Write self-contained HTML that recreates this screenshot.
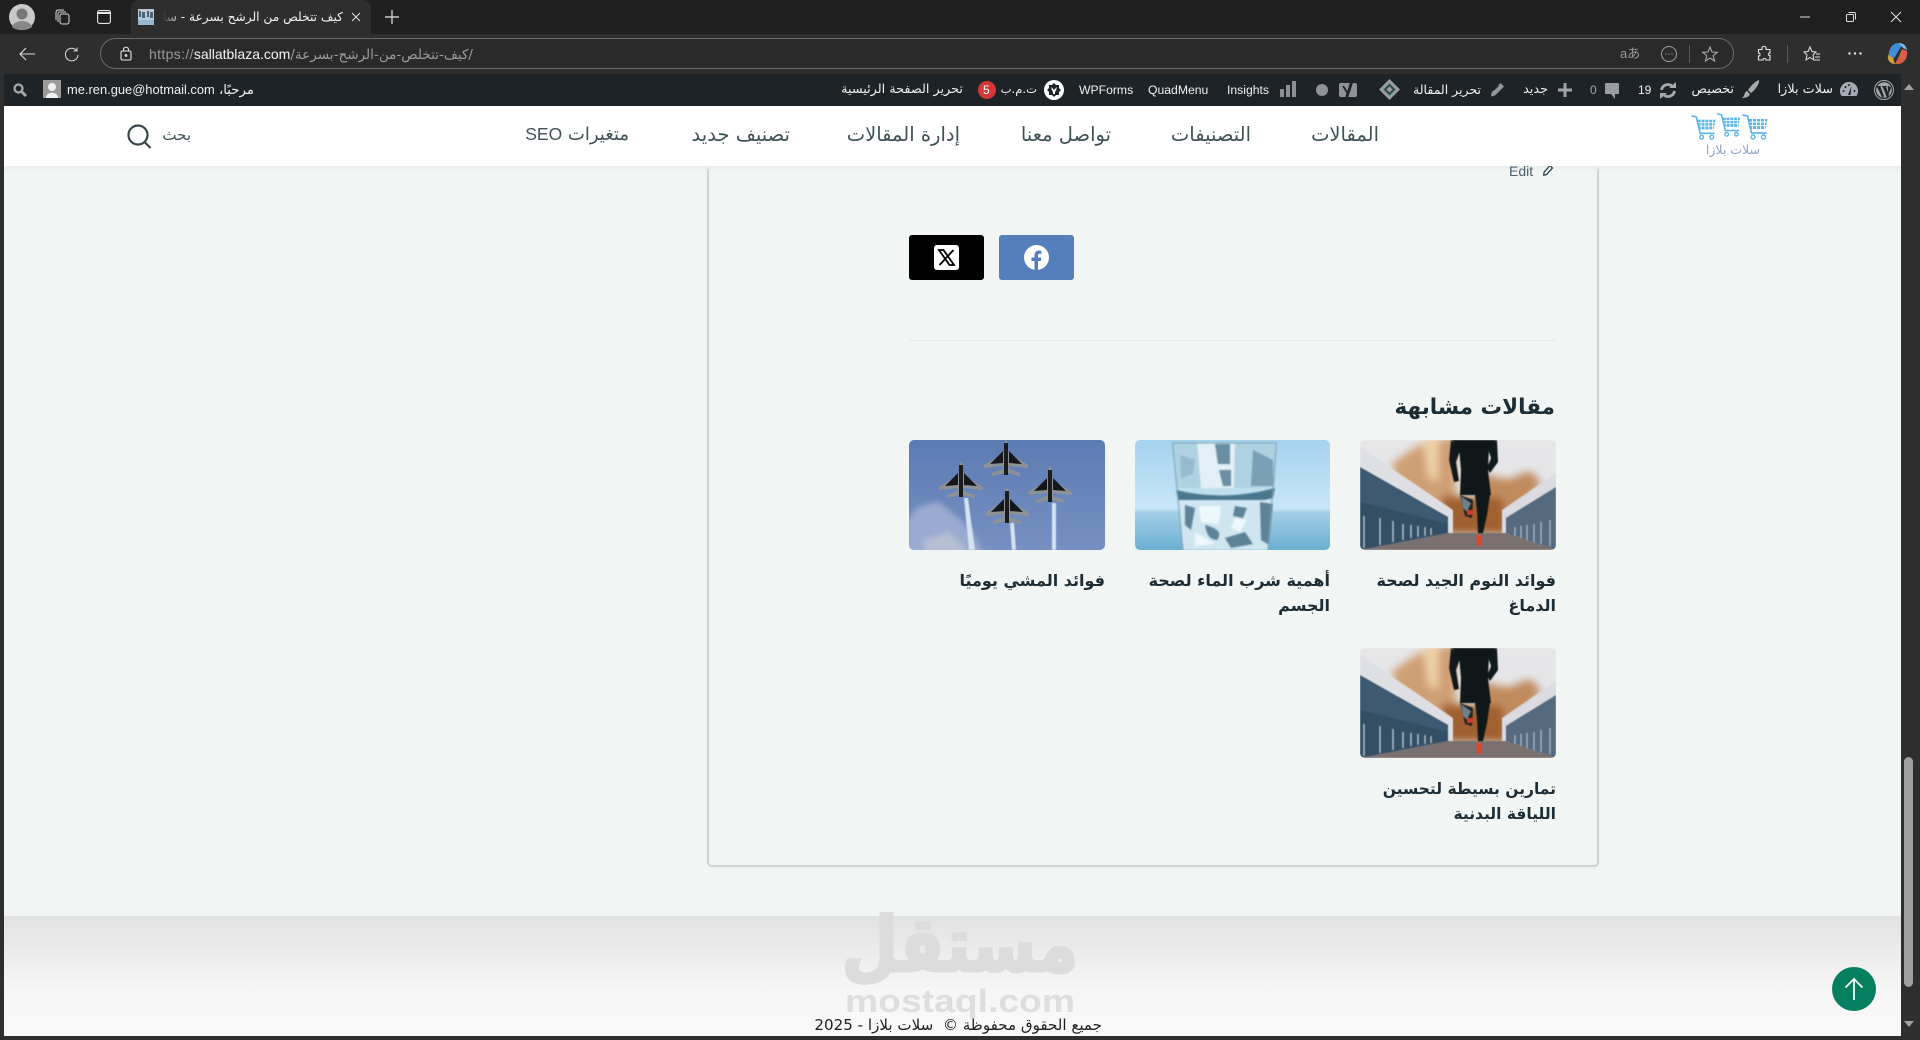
<!DOCTYPE html>
<html lang="ar">
<head>
<meta charset="utf-8">
<title>كيف تتخلص من الرشح بسرعة - سلات بلازا</title>
<style>
html,body{margin:0;padding:0;width:1920px;height:1040px;overflow:hidden;background:#2d2d2d;font-family:"DejaVu Sans","Liberation Sans",sans-serif}
.t{position:absolute;white-space:nowrap;line-height:1}
.ar{direction:rtl;font-family:"DejaVu Sans","Noto Sans CJK SC",sans-serif}
.la{font-family:"Liberation Sans",sans-serif}
.i{position:absolute;overflow:visible}
.box{position:absolute}
.adm{color:#f0f0f1;font-size:12.800px}
.nav{color:#3f5256;font-size:19.500px;top:125px}
.ttl{color:#1d2d35;font-size:16px;font-weight:bold;line-height:24.500px;text-align:right;width:196px;white-space:normal}
.pic{position:absolute;border-radius:5px;overflow:hidden;display:block}
</style>
</head>
<body>
<svg width="0" height="0" style="position:absolute">
<defs>
<symbol id="run" viewBox="0 0 196 110" preserveAspectRatio="none">
<rect width="196" height="110" fill="#e6e6e8"/>
<g style="filter:blur(4px)">
<path d="M32 24C45 14 60 2 78 -2L96 -2 96 94 44 80Z" fill="#cf9f74"/>
<path d="M62 -2H80L78 42 68 38Z" fill="#ecd0a8"/>
<path d="M126 34C140 38 150 42 160 34 170 30 176 32 180 44L150 94H110Z" fill="#c08c5e"/>
<path d="M82 56 142 58 146 94H86Z" fill="#a0602f"/>
</g>
<path d="M0 7 93 70 93 93 88 93 88 77 0 27Z" fill="#dedfe4"/>
<path d="M0 27 88 77 88 93 0 110Z" fill="#3d5a72"/>
<path d="M0 62 88 84 88 93 0 110Z" fill="#2f4a60" opacity=".7"/>
<path d="M4 76V108M20 78V105M33 81V102M43 84V100M51 85V98M58 86V97M65 87V96M71 88V95" stroke="#b9c4d2" stroke-width="1.400"/>
<path d="M196 33 142 70V93H146V78L196 47Z" fill="#dadae0"/>
<path d="M196 47 146 78V93L196 110Z" fill="#55697f"/>
<path d="M190 80V106M181 82V104M174 84V102M167 85V100M161 86V98M155 87V96" stroke="#b7c0cc" stroke-width="1.200"/>
<path d="M0 110 88 93H146L196 110Z" fill="#79706f"/>
<path d="M91 0 89 20 94 42 99 41 96 22 101 8Z" fill="#10191b"/>
<path d="M137 0 138 22 130 33 127 28 131 18 127 6Z" fill="#10191b"/>
<path d="M92 0H136L129 8 128 30 131 55 100 55 101 30 99 8Z" fill="#0f1719"/>
<path d="M100 55 113 60 112 78 105 76Z" fill="#1a2326"/>
<path d="M101 56 111 63 107 72 103 68Z" fill="#6f8088"/>
<path d="M115 55H130L127 75 123 93H118L117 70Z" fill="#10181a"/>
<rect x="107" y="70" width="6" height="5" fill="#d03a28"/>
<path d="M116 95H122L121 106H117Z" fill="#dc4530"/>
</symbol>
<symbol id="jet" viewBox="-24 -20 48 40">
<path d="M-1.500-15L0-19 1.500-15 2.500-5 22 7V10L3 8 3 11 14 15V18L2 15 0 18-2 15-14 18V15L-3 11-3 8-22 10V7L-2.500-5Z" fill="#8f9294"/>
<path d="M-3-7-16 6-3 5ZM3-7 16 6 3 5Z" fill="#15181a"/>
<path d="M-2-15H2V17H-2Z" fill="#1a1c1e"/>
</symbol>
<symbol id="cart" viewBox="0 0 28 28">
<path d="M1 2 6 3 10 20H25" fill="none" stroke="#5ab6ea" stroke-width="1.700"/>
<path d="M7 6H26L24 16H9Z" fill="#5ab6ea"/>
<path d="M11 6V16M15 6V16M19 6V16M23 6V16M8 9H26M9 12.500H25" stroke="#fff" stroke-width=".9"/>
<circle cx="11.500" cy="24" r="2" fill="none" stroke="#5ab6ea" stroke-width="1.400"/>
<circle cx="22" cy="24" r="2" fill="none" stroke="#5ab6ea" stroke-width="1.400"/>
</symbol>
<linearGradient id="fade" x1="0" x2="1"><stop offset="0" stop-color="#2e2e2e"/><stop offset="1" stop-color="#2e2e2e" stop-opacity="0"/></linearGradient>
</defs>
</svg>

<!-- tab strip -->
<div class="box" style="left:0;top:0;width:1920px;height:34px;background:#202020"></div>
<div class="box" style="left:131px;top:0;width:240px;height:34px;background:#2e2e2e;border-radius:8px 8px 0 0"></div>
<svg class="i" style="left:9px;top:4px" width="26" height="26" viewBox="0 0 26 26"><circle cx="13" cy="13" r="13" fill="#c9c9c9"/><circle cx="13" cy="10" r="5.500" fill="#777"/><path d="M3 23C5 15 21 15 23 23 18 27 8 27 3 23Z" fill="#888"/></svg>
<svg class="i" style="left:54px;top:9px" width="16" height="16" viewBox="0 0 16 16" fill="none" stroke="#d8d8d8" stroke-width="1"><rect x="6" y="5" width="9" height="10" rx="2"/><path d="M4 13V5C4 3 5 3 6 3H12M2 11V4C2 2 3 1 4 1H10"/></svg>
<svg class="i" style="left:97px;top:10px" width="14" height="14" viewBox="0 0 14 14" fill="none" stroke="#e8e8e8" stroke-width="1.100"><rect x=".6" y=".6" width="12.800" height="12.800" rx="2"/><path d="M.6 3H13.400" stroke-width="2"/></svg>
<svg class="i" style="left:138px;top:9px" width="16" height="16" viewBox="0 0 16 16"><rect width="16" height="16" fill="#b8c8d6"/><path d="M1 2H3V8H1ZM4 3H7V9H4ZM9 2H11V8H9ZM12 3H15V9H12Z" fill="#4a6478"/><rect y="11" width="16" height="5" fill="#9ab6cc"/></svg>
<div class="t ar" style="left:163px;top:10px;width:180px;overflow:hidden;font-size:12.200px;color:#f2f2f2;height:14px;text-align:right;line-height:14px">كيف تتخلص من الرشح بسرعة - سلات بلازا</div>
<svg class="i" style="left:163px;top:9px" width="16" height="16"><rect width="16" height="16" fill="url(#fade)"/></svg>
<svg class="i" style="left:351px;top:12px" width="10" height="10" viewBox="0 0 10 10"><path d="M1 1 9 9M9 1 1 9" stroke="#e0e0e0" stroke-width="1"/></svg>
<svg class="i" style="left:385px;top:10px" width="14" height="14" viewBox="0 0 14 14"><path d="M7 0V14M0 7H14" stroke="#e8e8e8" stroke-width="1.200"/></svg>
<svg class="i" style="left:1800px;top:16px" width="10" height="2" viewBox="0 0 10 2"><path d="M0 1H10" stroke="#ddd" stroke-width="1"/></svg>
<svg class="i" style="left:1846px;top:12px" width="10" height="10" viewBox="0 0 10 10" fill="none" stroke="#ddd" stroke-width="1"><rect x=".5" y="2.500" width="7" height="7" rx="1"/><path d="M2.500 .5H8C9 .5 9.500 1 9.500 2V7.500"/></svg>
<svg class="i" style="left:1891px;top:12px" width="10" height="10" viewBox="0 0 10 10"><path d="M0 0 10 10M10 0 0 10" stroke="#e0e0e0" stroke-width="1"/></svg>

<!-- toolbar -->
<div class="box" style="left:0;top:34px;width:1920px;height:40px;background:#2e2e2e"></div>
<svg class="i" style="left:19px;top:47px" width="16" height="14" viewBox="0 0 16 14" fill="none" stroke="#dcdcdc" stroke-width="1.100"><path d="M16 7H1M7 1 1 7 7 13"/></svg>
<svg class="i" style="left:64px;top:47px" width="15" height="15" viewBox="0 0 15 15" fill="none" stroke="#dcdcdc" stroke-width="1"><path d="M12.500 3.500A6.300 6.300 0 1 0 14 8"/><path d="M13 .5V4H9.500"/></svg>
<div class="box" style="left:100px;top:38px;width:1632px;height:29px;border:1px solid #6b6b6b;border-radius:16px;background:#2a2a2a"></div>
<svg class="i" style="left:120px;top:46px" width="12" height="15" viewBox="0 0 12 15" fill="none" stroke="#e4e4e4" stroke-width="1.100"><rect x="1" y="5" width="10" height="9" rx="1.500"/><path d="M3.500 5V3.500C3.500 .5 8.500 .5 8.500 3.500V5"/><circle cx="6" cy="9.500" r=".8" fill="#e4e4e4"/></svg>
<div class="t la" style="left:149px;top:47px;font-size:14px;line-height:14px;color:#9b9b9b"><span style="letter-spacing:.35px">https://</span><span style="color:#f2f2f2">sallatblaza.com</span><span style="font-family:'DejaVu Sans',sans-serif;font-size:13.550px">/كيف-تتخلص-من-الرشح-بسرعة/</span></div>
<div class="t la" style="left:1620px;top:47px;font-size:13px;color:#9a9a9a;font-family:'Liberation Sans','Noto Sans CJK JP',sans-serif">aあ</div>
<svg class="i" style="left:1661px;top:46px" width="16" height="16" viewBox="0 0 16 16" fill="none" stroke="#a0a0a0" stroke-width="1"><circle cx="8" cy="8" r="7.500"/><path d="M4.500 8H5.500M7.500 8H8.500M10.500 8H11.500" stroke-width="1.300"/></svg>
<div class="box" style="left:1689px;top:45px;width:1px;height:18px;background:#5a5a5a"></div>
<svg class="i" style="left:1702px;top:46px" width="16" height="16" viewBox="0 0 16 16" fill="none" stroke="#a8a8a8" stroke-width="1.100"><path d="M8 1 10 6 15.300 6.300 11.200 9.700 12.500 15 8 12 3.500 15 4.800 9.700 .7 6.300 6 6Z"/></svg>
<svg class="i" style="left:1756px;top:46px" width="16" height="16" viewBox="0 0 16 16" fill="none" stroke="#e4e4e4" stroke-width="1.100"><path d="M6 1.500C6.500 0 9.500 0 10 1.500V3.500H14V7C12 6.500 12 10 14 9.500V14H10C10.500 12 6.500 12 7 14H2.500V10C4.500 10.500 4.500 6.500 2.500 7V3.500H6Z"/></svg>
<div class="box" style="left:1787px;top:45px;width:1px;height:18px;background:#5a5a5a"></div>
<svg class="i" style="left:1803px;top:46px" width="18" height="16" viewBox="0 0 18 16" fill="none" stroke="#e4e4e4" stroke-width="1"><path d="M7 1 9 5.500 13 6 10 9 11 14 7 11.500 3 14 4 9 1 6 5 5.500Z"/><path d="M13 8H17M12 11H17M12 14H17"/></svg>
<svg class="i" style="left:1848px;top:52px" width="14" height="3" viewBox="0 0 14 3"><circle cx="1.500" cy="1.500" r="1.200" fill="#e4e4e4"/><circle cx="7" cy="1.500" r="1.200" fill="#e4e4e4"/><circle cx="12.500" cy="1.500" r="1.200" fill="#e4e4e4"/></svg>
<svg class="i" style="left:1886px;top:43px" width="22" height="21" viewBox="0 0 22 21"><path d="M3 10C4 3 8 0 13 0L16 2 9 14 5 18C2 16 2 13 3 10Z" fill="#3f8fd8"/><path d="M13 0C17 0 20 2 21 7L17 5Z" fill="#7fb8e8"/><path d="M2 12 7 15 9 21C4 21 1 17 2 12Z" fill="#d8a030"/><path d="M16 6 21 8C22 14 19 20 13 21H9L13 13Z" fill="#d8604a"/></svg>

<!-- chrome edges -->
<div class="box" style="left:0;top:74px;width:4px;height:966px;background:#2e2e2e"></div>
<div class="box" style="left:0;top:1036px;width:1920px;height:4px;background:#2e2e2e"></div>
<div class="box" style="left:1901px;top:74px;width:19px;height:966px;background:#2e2e2e"></div>
<svg class="i" style="left:1904px;top:84px" width="10" height="6" viewBox="0 0 10 6"><path d="M5 0 10 6H0Z" fill="#a0a0a0"/></svg>
<div class="box" style="left:1904px;top:757px;width:9px;height:230px;border-radius:5px;background:#9f9f9f"></div>
<svg class="i" style="left:1904px;top:1021px" width="10" height="6" viewBox="0 0 10 6"><path d="M0 0H10L5 6Z" fill="#a0a0a0"/></svg>

<!-- page -->
<div class="box" style="left:4px;top:106px;width:1897px;height:930px;background:#f1f5f4;overflow:hidden"></div>

<!-- card -->
<div class="box" style="left:707px;top:120px;width:888px;height:745px;border:2px solid #ced4d8;border-top:0;border-radius:0 0 5px 5px;box-shadow:0 1px 2px rgba(0,0,0,.04)"></div>

<!-- admin bar -->
<div class="box" style="left:4px;top:74px;width:1897px;height:32px;background:#1d2327"></div>
<svg class="i" style="left:13px;top:83px" width="14" height="14" viewBox="0 0 14 14" fill="none" stroke="#a7aaad" stroke-width="2.200"><circle cx="5.500" cy="5.500" r="4"/><path d="M8.500 8.500 13 13" stroke-width="2.800"/></svg>
<svg class="i" style="left:43px;top:80px" width="18" height="18" viewBox="0 0 18 18"><rect width="18" height="18" fill="#9c9c9c"/><circle cx="9" cy="7" r="4" fill="#f0f0f0"/><path d="M3 18C3 11 15 11 15 18Z" fill="#f0f0f0"/></svg>
<div class="t la adm" style="left:67px;top:84px;font-size:12.900px">me.ren.gue@hotmail.com</div>
<div class="t ar adm" style="right:1666px;top:84px;font-size:13.300px">مرحبًا،</div>
<div class="t ar adm" style="right:957px;top:84px">تحرير الصفحة الرئيسية</div>
<svg class="i" style="left:978px;top:81px" width="18" height="18" viewBox="0 0 18 18"><circle cx="9" cy="9" r="9" fill="#d63638"/></svg>
<div class="t la" style="left:983px;top:84px;font-size:12px;color:#fff">5</div>
<div class="t ar adm" style="right:883px;top:84px;font-size:11.600px">ت.م.ب</div>
<svg class="i" style="left:1044px;top:80px" width="20" height="20" viewBox="0 0 20 20"><circle cx="10" cy="10" r="10" fill="#fff"/><path d="M10 3 12 5 15 5 15 8 17 10 15 12 15 15 12 15 10 17 8 15 5 15 5 12 3 10 5 8 5 5 8 5Z" fill="#1d2327"/><path d="M7.500 7 10 10 12.500 7V9.500L11 12V14H9V12L7.500 9.500Z" fill="#fff"/></svg>
<div class="t la adm" style="left:1079px;top:84px;font-size:12.200px">WPForms</div>
<div class="t la adm" style="left:1148px;top:84px;font-size:12.200px">QuadMenu</div>
<div class="t la adm" style="left:1227px;top:84px;font-size:12.200px">Insights</div>
<svg class="i" style="left:1280px;top:81px" width="16" height="16" viewBox="0 0 16 16"><path d="M0 8H4V16H0ZM6 4H10V16H6ZM12 0H16V16H12Z" fill="#8c8f94"/></svg>
<svg class="i" style="left:1316px;top:84px" width="12" height="12" viewBox="0 0 12 12"><circle cx="6" cy="6" r="6" fill="#8f9296"/></svg>
<svg class="i" style="left:1339px;top:80px" width="18" height="19" viewBox="0 0 18 19"><path d="M0 5Q0 3 2 3H16Q18 3 18 5V15Q18 17 16 17H2Q0 17 0 15Z" fill="#8f9296"/><path d="M5 6 8.500 11 11.500 1H14.500L9 18H6L7.500 13 3 6Z" fill="#1d2327"/></svg>
<svg class="i" style="left:1379px;top:79px" width="21" height="21" viewBox="0 0 21 21"><path d="M10.500 0 21 10.500 10.500 21 0 10.500Z" fill="#9a9da0"/><path d="M10.500 4 17 10.500 10.500 17 4 10.500Z" fill="#3a4a50" stroke="#6aa" stroke-width=".6"/><path d="M10.500 7.500 13.500 10.500 10.500 13.500 7.500 10.500Z" fill="#9a9da0"/></svg>
<div class="t ar adm" style="right:439px;top:84px;font-size:12.500px">تحرير المقالة</div>
<svg class="i" style="left:1490px;top:82px" width="15" height="15" viewBox="0 0 15 15"><path d="M10.500 1 14 4.500 5 13.500 1 14.500 1.500 10.500Z" fill="#8f98a2"/><path d="M3.500 8.500 9 3.500" stroke="#1d2327" stroke-width=".7"/></svg>
<div class="t ar adm" style="right:372px;top:84px">جديد</div>
<svg class="i" style="left:1558px;top:83px" width="14" height="14" viewBox="0 0 14 14"><path d="M5.500 0H8.500V5.500H14V8.500H8.500V14H5.500V8.500H0V5.500H5.500Z" fill="#a0a3a7"/></svg>
<div class="t la adm" style="left:1590px;top:84px;font-size:12px;color:#a7aaad">0</div>
<svg class="i" style="left:1605px;top:83px" width="14" height="16" viewBox="0 0 14 16"><path d="M1 0H13Q14 0 14 1V10Q14 11 13 11H10V16L6 11H1Q0 11 0 10V1Q0 0 1 0Z" fill="#9a9da1"/></svg>
<div class="t la adm" style="left:1638px;top:84px;font-size:12px">19</div>
<svg class="i" style="left:1659px;top:82px" width="18" height="17" viewBox="0 0 18 17" fill="none" stroke="#a7aaad" stroke-width="2.800"><path d="M2.500 8A6.500 6.500 0 0 1 14 5M15.500 9A6.500 6.500 0 0 1 4 12"/><path d="M10 6H17V0ZM8 11H1V17Z" fill="#a7aaad" stroke="none"/></svg>
<div class="t ar adm" style="right:186px;top:84px">تخصيص</div>
<svg class="i" style="left:1742px;top:80px" width="18" height="19" viewBox="0 0 18 19"><path d="M17 0C18 4 12 11 9 13L6 10C8 7 13 1 17 0Z" fill="#a7aaad"/><path d="M5 11 8 14C7 17 4 18 0 18 3 16 2 12 5 11Z" fill="#a7aaad"/></svg>
<div class="t ar adm" style="right:87px;top:84px">سلات بلازا</div>
<svg class="i" style="left:1840px;top:82px" width="18" height="15" viewBox="0 0 18 15"><path d="M9 0A9 9 0 0 0 1.500 14H16.500A9 9 0 0 0 9 0Z" fill="#a5abb2"/><path d="M8 13 11.500 4 10.500 13Z" fill="#1d2327"/><circle cx="3.500" cy="9" r="1" fill="#1d2327"/><circle cx="5.500" cy="5" r="1" fill="#1d2327"/><circle cx="9" cy="3" r="1" fill="#1d2327"/><circle cx="14.500" cy="9" r="1" fill="#1d2327"/></svg>
<svg class="i" style="left:1874px;top:80px" width="20" height="20" viewBox="0 0 20 20"><circle cx="10" cy="10" r="9.500" fill="none" stroke="#a7aaad" stroke-width="1"/><circle cx="10" cy="10" r="7.800" fill="#a7aaad"/><path d="M2.500 6H7.200L6.500 7 10 16 8.500 18ZM7.500 6H13L12 7 15 15 13 18 10 10 8.500 6.800ZM13.500 6.500C15 5.500 17 7 17 8L14.500 14.500 13.700 7.500Z" fill="#1d2327"/></svg>

<!-- header -->
<div class="box" style="left:4px;top:106px;width:1897px;height:60px;background:#fff"></div>
<div class="box" style="left:4px;top:166px;width:1897px;height:6px;background:linear-gradient(#e9eeed,rgba(241,245,244,0))"></div>
<svg class="i" style="left:1690px;top:114px" width="28" height="27"><use href="#cart" width="28" height="27"/></svg>
<svg class="i" style="left:1715px;top:112px" width="28" height="26"><use href="#cart" width="28" height="26"/></svg>
<svg class="i" style="left:1741px;top:113px" width="29" height="28"><use href="#cart" width="29" height="28"/></svg>
<div class="t ar" style="right:160px;top:144px;font-size:12.500px;color:#90a4c6">سلات بلازا</div>
<div class="t ar nav" style="right:541px">المقالات</div>
<div class="t ar nav" style="right:669px">التصنيفات</div>
<div class="t ar nav" style="right:809px">تواصل معنا</div>
<div class="t ar nav" style="right:960px">إدارة المقالات</div>
<div class="t ar nav" style="right:1130px">تصنيف جديد</div>
<div class="t ar nav" style="right:1291px;font-size:18px;top:126px">متغيرات <span class="la" style="font-size:17.500px">SEO</span></div>
<div class="t ar nav" style="right:1729px;font-size:15px;top:128px">بحث</div>
<svg class="i" style="left:127px;top:124px" width="25" height="25" viewBox="0 0 25 25" fill="none" stroke="#37474a" stroke-width="2.200"><circle cx="11" cy="11" r="9.500"/><path d="M17.500 18 23.500 24"/></svg>

<div class="box" style="left:1500px;top:166px;width:70px;height:14px;overflow:hidden"><div class="t la" style="left:9px;top:-2px;font-size:14px;color:#4b6070;line-height:14px">Edit</div><svg class="i" style="left:43px;top:-1px" width="10" height="11" viewBox="0 0 10 11"><path d="M7 .5 9.500 3 3.500 9.500 .8 10.200 1 7.300Z" fill="none" stroke="#33434c" stroke-width="1.300"/></svg></div>

<!-- share -->
<div class="box" style="left:909px;top:235px;width:75px;height:45px;background:#000;border-radius:3px"></div>
<svg class="i" style="left:934px;top:245px" width="25" height="25" viewBox="0 0 25 25"><rect width="25" height="25" rx="3" fill="#fff"/><path d="M5 5H9.500L20 20H15.500ZM19.500 5 5.500 20" fill="none" stroke="#000" stroke-width="1.800"/></svg>
<div class="box" style="left:999px;top:235px;width:75px;height:45px;background:#557ebd;border-radius:3px"></div>
<svg class="i" style="left:1024px;top:245px" width="25" height="25" viewBox="0 0 25 25"><circle cx="12.500" cy="12.500" r="12.500" fill="#fff"/><path d="M10.500 25V16H7.500V12.500H10.500V10C10.500 7 12.500 5.500 15 5.500L17.500 5.800V8.700H16C14.500 8.700 14 9.500 14 10.500V12.500H17.300L16.800 16H14V25Z" fill="#557ebd"/></svg>

<div class="box" style="left:909px;top:340px;width:647px;height:1px;background:#e4ebea"></div>

<div class="t ar" style="right:365px;top:395px;font-size:21.500px;font-weight:bold;color:#1d2d35;line-height:26px">مقالات مشابهة</div>

<!-- cards -->
<svg class="pic" style="left:1360px;top:440px" width="196" height="110"><use href="#run" width="196" height="110" style="filter:blur(.4px)"/></svg>
<svg class="pic" style="left:1135px;top:440px" width="195" height="110" viewBox="0 0 195 110">
<defs><linearGradient id="sky" x1="0" y1="0" x2="0" y2="1"><stop offset="0" stop-color="#a6d3ee"/><stop offset=".62" stop-color="#c8e6f9"/><stop offset=".66" stop-color="#a3cfe6"/><stop offset="1" stop-color="#6aafd2"/></linearGradient></defs>
<rect width="195" height="110" fill="url(#sky)"/>
<g style="filter:blur(.8px)">
<path d="M37 3H142L133 110H48Z" fill="#bfdfee"/>
<path d="M38 3H142L140 48H41Z" fill="#afd2e3"/>
<path d="M62 3H100L99 48H66Z" fill="#e2eff5"/>
<path d="M80 4H95V24H83ZM84 30H96V46H88Z" fill="#6a8ea2"/>
<path d="M118 10 138 20 138 46H116Z" fill="#7b9fb5"/>
<path d="M45 15 60 20 58 34 46 38Z" fill="#97bbce"/>
<path d="M41 50Q90 62 140 48L138 58Q90 70 43 60Z" fill="#4a7790"/>
<path d="M43 60H138L133 110H48Z" fill="#cfe6f1"/>
<path d="M50 65 60 68 56 90 50 85ZM125 62 138 64 134 105 126 100ZM70 85Q90 90 82 100 72 100 70 85ZM90 98 110 92 118 104 96 108ZM100 66 112 68 108 78 98 76Z" fill="#5d8398"/>
<path d="M60 92 80 104 60 106ZM100 78 112 80 105 92 96 88ZM64 66 86 66 84 84 66 82Z" fill="#eef7fb"/>
<path d="M37.500 3 48 110M141.500 3 133 110M37 3H142" fill="none" stroke="#7d9eb2" stroke-width="1"/>
</g>
</svg>
<svg class="pic" style="left:909px;top:440px" width="196" height="110" viewBox="0 0 196 110">
<defs><linearGradient id="bl" x1="0" y1="0" x2="0" y2="1"><stop offset="0" stop-color="#5c7bb3"/><stop offset="1" stop-color="#7690c2"/></linearGradient></defs>
<rect width="196" height="110" fill="url(#bl)"/>
<g style="filter:blur(3px)">
<path d="M-4 82 10 66 30 62 46 75 62 90 75 114H-4Z" fill="#9aaad0"/>
<path d="M15 100 40 92 62 114H15Z" fill="#b7bfd4"/>
</g>
<path d="M55 58 59 58 66 110 60 110ZM101 83H105L107 110H103ZM143 63H147L147 110H143Z" fill="#d4e4f2" style="filter:blur(.5px)"/>
<g style="filter:blur(.3px)">
<use href="#jet" x="73" y="-2" width="48" height="40"/>
<use href="#jet" x="28" y="20" width="48" height="40"/>
<use href="#jet" x="117" y="25" width="48" height="40"/>
<use href="#jet" x="74" y="46" width="48" height="40"/>
</g>
</svg>
<div class="t ar ttl" style="left:1360px;top:569px">فوائد النوم الجيد لصحة الدماغ</div>
<div class="t ar ttl" style="left:1134px;top:569px">أهمية شرب الماء لصحة الجسم</div>
<div class="t ar ttl" style="left:909px;top:569px">فوائد المشي يوميًا</div>
<svg class="pic" style="left:1360px;top:648px" width="196" height="110"><use href="#run" width="196" height="110" style="filter:blur(.4px)"/></svg>
<div class="t ar ttl" style="left:1360px;top:777px;font-size:15.500px">تمارين بسيطة لتحسين اللياقة البدنية</div>

<!-- footer -->
<div class="box" style="left:4px;top:916px;width:1897px;height:120px;background:linear-gradient(#e2e2e2,#f6f6f6 62%,#f9f9f9)"></div>
<div class="t ar" style="left:760px;top:905px;width:400px;text-align:center;font-size:76px;font-weight:bold;color:#dcdcdc;-webkit-text-stroke:3px #dcdcdc;line-height:80px;transform:scaleX(.85)">مستقل</div>
<div class="t la" style="left:760px;top:985px;width:400px;text-align:center;font-size:32px;font-weight:bold;color:#dedede;line-height:32px;transform:scaleX(1.165)">mostaql.com</div>
<div class="t ar" style="right:818px;top:1018px;font-size:15.100px;color:#1f1f1f;line-height:15px">جميع الحقوق محفوظة ©&nbsp; سلات بلازا - 2025</div>
<svg class="i" style="left:1832px;top:967px" width="44" height="44" viewBox="0 0 44 44"><circle cx="22" cy="22" r="22" fill="#048060"/><path d="M22 33V12M13.500 20.500 22 12 30.500 20.500" fill="none" stroke="#fff" stroke-width="1.700"/></svg>
</body>
</html>
